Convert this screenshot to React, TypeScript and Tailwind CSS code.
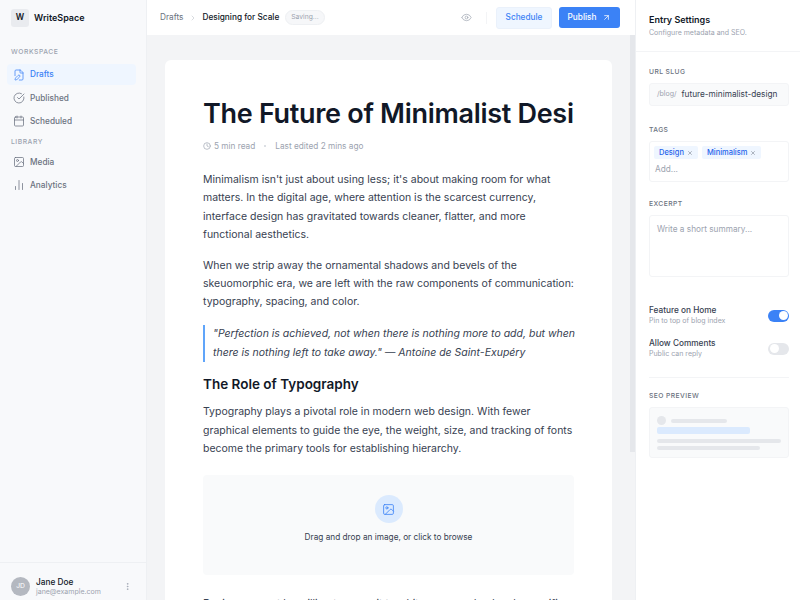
import { Calendar, ChartNoAxesColumn, CircleCheckBig, Clock, Eye, FilePen, Image, MoreVertical, ChevronRight, ArrowUpRight, X } from 'lucide-react'

const NAV_TOP = [
  { label: 'Drafts', icon: FilePen, active: true },
  { label: 'Published', icon: CircleCheckBig },
  { label: 'Scheduled', icon: Calendar },
]

const NAV_LIB = [
  { label: 'Media', icon: Image },
  { label: 'Analytics', icon: ChartNoAxesColumn },
]

function NavItem({ label, icon: Icon, active }: { label: string; icon: typeof Image; active?: boolean }) {
  return (
    <div
      className={`flex h-[21px] items-center gap-[5px] rounded-[4px] px-[6px] text-[8.25px] font-medium ${
        active ? 'bg-[#eff6ff] text-[#3b82f6]' : 'text-[#6b7280]'
      }`}
    >
      <Icon size={12} strokeWidth={1.5} />
      {label}
    </div>
  )
}

function Sidebar() {
  return (
    <aside className="flex w-[147px] shrink-0 flex-col border-r border-[#eef0f3] bg-[#f8f9fb]">
      <div className="flex h-[35px] items-center gap-[5px] px-[11px]">
        <div className="flex h-[18px] w-[18px] items-center justify-center rounded-[3px] bg-[#e9ebef] text-[8.25px] font-semibold text-[#111827]">
          W
        </div>
        <span className="text-[9px] font-semibold text-[#111827]">WriteSpace</span>
      </div>
      <div className="flex flex-1 flex-col pl-[7px] pr-[10px] pt-[12px]">
        <div className="mb-[7px] px-[4px] text-[6.75px] font-medium leading-[10px] tracking-[0.08em] text-[#9ca3af]">WORKSPACE</div>
        <div className="flex flex-col gap-[2.25px]">
          {NAV_TOP.map((n) => (
            <NavItem key={n.label} {...n} />
          ))}
        </div>
        <div className="mb-[5px] mt-[5px] px-[4px] text-[6.75px] font-medium leading-[10px] tracking-[0.08em] text-[#9ca3af]">LIBRARY</div>
        <div className="flex flex-col gap-[2.25px]">
          {NAV_LIB.map((n) => (
            <NavItem key={n.label} {...n} />
          ))}
        </div>
      </div>
      <div className="flex h-[38px] items-center gap-[6px] border-t border-[#eef0f3] pl-[11px] pr-[14px] pt-[10px]">
        <div className="flex h-[19px] w-[19px] items-center justify-center rounded-full bg-[#b4b8c0] text-[6.75px] text-white">JD</div>
        <div className="min-w-0 flex-1">
          <div className="text-[8.25px] font-medium leading-[10px] text-[#111827]">Jane Doe</div>
          <div className="text-[7px] leading-[10px] text-[#9ca3af]">jane@example.com</div>
        </div>
        <MoreVertical size={9} className="text-[#9ca3af]" />
      </div>
    </aside>
  )
}

function Header() {
  return (
    <header className="flex h-[35px] shrink-0 items-center justify-between bg-white pl-[13px] pr-[15px] text-[8.25px]">
      <div className="flex items-center">
        <span className="text-[#6b7280]">Drafts</span>
        <ChevronRight size={8} className="mx-[5.5px] text-[#c4c8cf]" />
        <span className="font-medium text-[#111827]">Designing for Scale</span>
        <span className="ml-[6px] rounded-full border border-[#eef0f3] bg-[#f6f7f9] px-[5px] py-[1px] text-[6.75px] text-[#9ca3af]">Saving...</span>
      </div>
      <div className="flex items-center">
        <Eye size={11} strokeWidth={1.5} className="text-[#9ca3af]" />
        <div className="ml-[14px] mr-[9px] h-[12px] w-px bg-[#f3f4f6]" />
        <button className="h-[22px] w-[56px] rounded-[3px] border border-[#eaf1fb] bg-[#eff6ff] font-medium text-[#3b82f6]">Schedule</button>
        <button className="ml-[7px] flex h-[21px] w-[61px] items-center justify-center gap-[6px] rounded-[3px] bg-[#3b82f6] font-medium text-white">
          Publish
          <ArrowUpRight size={9} />
        </button>
      </div>
    </header>
  )
}

function Editor() {
  const body = 'text-[10.5px] leading-[18.375px] text-[#374151]'
  return (
    <main className="flex min-h-0 flex-1 overflow-hidden bg-[#f3f4f6]">
      <div className="min-w-0 flex-1 overflow-hidden pl-[18px] pr-[18px] pt-[25px]">
        <article className="h-[700px] rounded-[6px] bg-white px-[38px] pt-[36px]">
          <div className="overflow-hidden whitespace-nowrap text-[27px] font-semibold leading-[35px] tracking-[-0.3px] text-[#111827]">
            The Future of Minimalist Design in 2024
          </div>
          <div className="mt-[9px] flex h-[12px] items-center text-[8.25px] text-[#9ca3af]">
            <Clock size={8} className="mr-[3px]" />
            5 min read
            <span className="mx-[9px] h-[2px] w-[2px] rounded-full bg-[#d1d5db]" />
            Last edited 2 mins ago
          </div>
          <p className={`mt-[19px] ${body}`}>
            Minimalism isn't just about using less; it's about making room for what matters. In the digital age, where attention is the scarcest currency, interface design has gravitated towards cleaner, flatter, and more functional aesthetics.
          </p>
          <p className={`mt-[12px] ${body}`}>
            When we strip away the ornamental shadows and bevels of the skeuomorphic era, we are left with the raw components of communication: typography, spacing, and color.
          </p>
          <blockquote className={`mt-[13.5px] -mr-[3px] border-l-2 border-[#60a5fa] pl-[8px] italic text-[#4b5563] ${body}`}>
            "Perfection is achieved, not when there is nothing more to add, but when there is nothing left to take away." — Antoine de Saint-Exupéry
          </blockquote>
          <h2 className="mt-[12px] text-[13.5px] font-semibold leading-[20px] text-[#111827]">The Role of Typography</h2>
          <p className={`mt-[9.5px] ${body}`}>
            Typography plays a pivotal role in modern web design. With fewer graphical elements to guide the eye, the weight, size, and tracking of fonts become the primary tools for establishing hierarchy.
          </p>
          <div className="mt-[16px] flex h-[100px] flex-col items-center justify-center rounded-[4px] bg-[#f9fafb] pb-[10px]">
            <div className="flex h-[28px] w-[28px] items-center justify-center rounded-full bg-[#dbeafe] text-[#3b82f6]">
              <Image size={13} strokeWidth={1.5} />
            </div>
            <div className="mt-[8px] text-[8.25px] text-[#374151]">Drag and drop an image, or click to browse</div>
          </div>
          <p className={`mt-[20px] ${body}`}>
            Designers must be willing to commit to whitespace and a deeply specific flow of
          </p>
        </article>
      </div>
      <div className="w-[5px] shrink-0 bg-[#f3f4f6]">
        <div className="h-[417px] bg-[#e5e7eb]" />
      </div>
    </main>
  )
}

function Toggle({ on }: { on?: boolean }) {
  return (
    <div className={`flex h-[12px] w-[21px] items-center rounded-full px-[1.5px] ${on ? 'justify-end bg-[#3b82f6]' : 'justify-start bg-[#e5e7eb]'}`}>
      <div className="h-[9px] w-[9px] rounded-full bg-white" />
    </div>
  )
}

function Label({ children }: { children: string }) {
  return <div className="mb-[6px] text-[6.75px] font-medium leading-[10px] tracking-[0.06em] text-[#6b7280]">{children}</div>
}

function Tag({ children }: { children: string }) {
  return (
    <span className="flex h-[13px] items-center gap-[3px] rounded-[2px] bg-[#eff6ff] px-[5px] text-[7.5px] font-medium text-[#2563eb]">
      {children}
      <X size={6} className="text-[#6b7280]" />
    </span>
  )
}

function SettingsPanel() {
  return (
    <aside className="flex w-[165px] shrink-0 flex-col border-l border-[#eef0f3] bg-white">
      <div className="h-[52px] shrink-0 border-b border-[#f3f4f6] pl-[13px] pt-[13px]">
        <div className="text-[9px] font-semibold leading-[13px] text-[#111827]">Entry Settings</div>
        <div className="mt-[2px] text-[7px] leading-[10px] text-[#9ca3af]">Configure metadata and SEO.</div>
      </div>
      <div className="flex flex-col pl-[13px] pr-[11px] pt-[15px]">
        <Label>URL SLUG</Label>
        <div className="flex h-[23px] items-center gap-[5px] whitespace-nowrap rounded-[3px] border border-[#f3f4f6] bg-[#f9fafb] px-[7px]">
          <span className="text-[7px] text-[#9ca3af]">/blog/</span>
          <span className="text-[8.25px] text-[#374151]">future-minimalist-design</span>
        </div>
        <div className="mt-[19px]">
          <Label>TAGS</Label>
        </div>
        <div className="h-[41px] rounded-[3px] border border-[#f3f4f6] px-[4px] pt-[4px]">
          <div className="flex gap-[4px]">
            <Tag>Design</Tag>
            <Tag>Minimalism</Tag>
          </div>
          <div className="mt-[5px] pl-[1px] text-[8.25px] leading-[11px] text-[#9ca3af]">Add...</div>
        </div>
        <div className="mt-[17px]">
          <Label>EXCERPT</Label>
        </div>
        <div className="h-[62px] rounded-[3px] border border-[#f3f4f6] px-[7px] pt-[7px] text-[8.25px] text-[#9ca3af]">Write a short summary...</div>
        <div className="mt-[28px] flex items-center justify-between">
          <div>
            <div className="text-[8.25px] font-medium leading-[11px] text-[#374151]">Feature on Home</div>
            <div className="text-[7px] leading-[10px] text-[#9ca3af]">Pin to top of blog index</div>
          </div>
          <Toggle on />
        </div>
        <div className="mt-[12px] flex items-center justify-between">
          <div>
            <div className="text-[8.25px] font-medium leading-[11px] text-[#374151]">Allow Comments</div>
            <div className="text-[7px] leading-[10px] text-[#9ca3af]">Public can reply</div>
          </div>
          <Toggle />
        </div>
        <div className="mb-[13px] mt-[18px] h-px bg-[#f3f4f6]" />
        <Label>SEO PREVIEW</Label>
        <div className="h-[51px] rounded-[3px] border border-[#f3f4f6] bg-[#f9fafb] px-[7px] pt-[8px]">
          <div className="flex items-center gap-[5px]">
            <div className="h-[9px] w-[9px] rounded-full bg-[#e5e7eb]" />
            <div className="h-[4px] w-[56px] rounded-[2px] bg-[#e5e7eb]" />
          </div>
          <div className="mt-[2px] h-[7px] w-[93px] rounded-[2px] bg-[#dbeafe]" />
          <div className="mt-[5px] h-[4px] w-[124px] rounded-[2px] bg-[#e5e7eb]" />
          <div className="mt-[3px] h-[4px] w-[103px] rounded-[2px] bg-[#e5e7eb]" />
        </div>
      </div>
    </aside>
  )
}

export default function App() {
  return (
    <div className="flex h-[600px] w-[800px] overflow-hidden bg-white font-['Inter',sans-serif]">
      <Sidebar />
      <div className="flex min-w-0 flex-1 flex-col">
        <Header />
        <Editor />
      </div>
      <SettingsPanel />
    </div>
  )
}
